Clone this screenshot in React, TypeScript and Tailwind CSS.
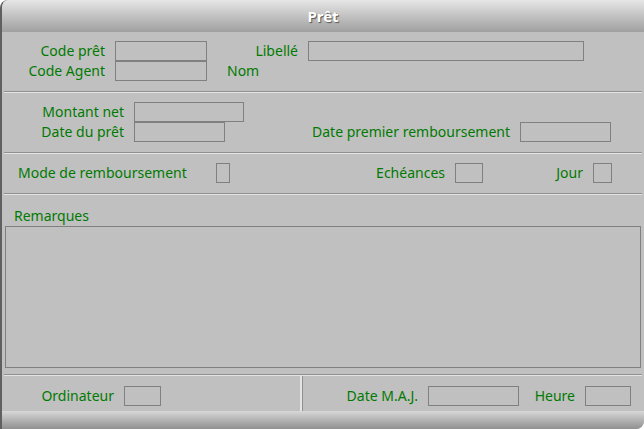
const F = "[font-family:'DejaVu_Sans',sans-serif]";

function Field({ w, h = 20 }: { w: number; h?: number }) {
  return <div className="border border-[#808080] bg-[#c0c0c0] shrink-0" style={{ width: w, height: h }} />;
}

function Label({ w, children }: { w: number; children: React.ReactNode }) {
  return (
    <div className="shrink-0 text-[14px] text-[#007a00] text-right pr-[10px] leading-[20px] whitespace-nowrap" style={{ width: w }}>
      {children}
    </div>
  );
}

function Sep() {
  return <div className="h-[2px] shrink-0 border-t border-[#909090] border-b border-b-[#e4e4e4] mx-[2px]" />;
}

export default function App() {
  return (
    <div className={`${F} w-[644px] h-[429px] bg-[#c0c0c0] flex flex-col rounded-tl-[8px] rounded-br-[8px] overflow-hidden border-l-2 border-[#606060]`}>
      <div className="h-[32px] shrink-0 bg-gradient-to-b from-[#e6e6e6] to-[#a0a0a0] flex items-center justify-center">
        <span className="text-white font-bold text-[15px] [text-shadow:1px_1px_1px_#555]">Prêt</span>
      </div>
      <div className="pt-[9px] h-[59px] shrink-0">
        <div className="flex items-center">
          <Label w={113}>Code prêt</Label>
          <Field w={92} />
          <Label w={101}>Libellé</Label>
          <Field w={276} />
        </div>
        <div className="flex items-center">
          <Label w={113}>Code Agent</Label>
          <Field w={92} />
          <div className="ml-[20px] text-[14px] text-[#007a00] leading-[20px]">Nom</div>
        </div>
      </div>
      <Sep />
      <div className="pt-[9px] h-[59px] shrink-0">
        <div className="flex items-center">
          <Label w={132}>Montant net</Label>
          <Field w={110} />
        </div>
        <div className="flex items-center">
          <Label w={132}>Date du prêt</Label>
          <Field w={91} />
          <Label w={295}>Date premier remboursement</Label>
          <Field w={91} />
        </div>
      </div>
      <Sep />
      <div className="pt-[9px] h-[39px] shrink-0 flex items-start">
        <div className="w-[214px] pl-[16px] text-[14px] text-[#007a00] leading-[20px] whitespace-nowrap">Mode de remboursement</div>
        <Field w={14} />
        <Label w={225}>Echéances</Label>
        <Field w={28} />
        <Label w={110}>Jour</Label>
        <Field w={19} />
      </div>
      <Sep />
      <div className="pt-[11px] px-[3px] flex flex-col h-[179px] shrink-0">
        <div className="pl-[9px] text-[14px] text-[#007a00] leading-[20px]">Remarques</div>
        <div className="h-[142px] border border-[#808080]" />
      </div>
      <Sep />
      <div className="flex h-[35px] shrink-0">
        <div className="w-[300px] flex items-center border-r-2 border-r-[#e4e4e4] shadow-[1px_0_0_#909090] pt-[4px]">
          <Label w={122}>Ordinateur</Label>
          <Field w={37} />
        </div>
        <div className="flex items-center pt-[4px]">
          <Label w={126}>Date M.A.J.</Label>
          <Field w={91} />
          <Label w={66}>Heure</Label>
          <Field w={46} />
        </div>
      </div>
      <div className="flex-1 bg-gradient-to-b from-[#d8d8d8] to-[#909090]" />
    </div>
  );
}
